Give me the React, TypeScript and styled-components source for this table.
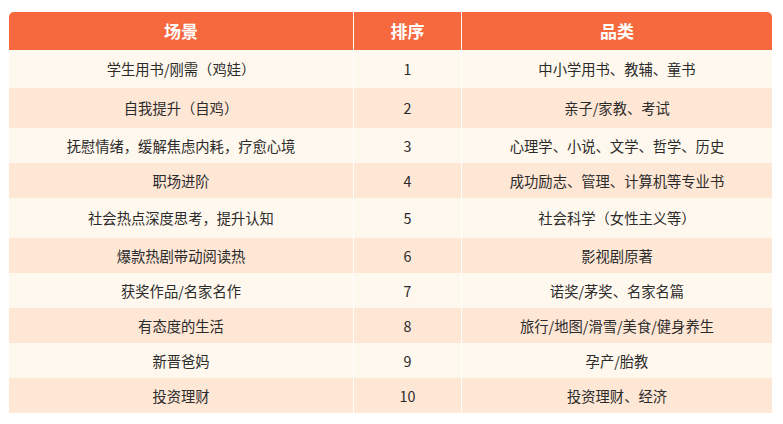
import React from "react";
import styled, { createGlobalStyle } from "styled-components";

const Global = createGlobalStyle`
  html, body { margin: 0; padding: 0; background: #ffffff; }
  body { font-family: "Noto Sans CJK SC", "Noto Sans", sans-serif; }
`;

const Page = styled.div`
  padding: 12px 13px 0 9px;
  width: 783px;
  box-sizing: border-box;
`;

const Table = styled.table`
  width: 761px;
  border-collapse: separate;
  border-spacing: 0;
  table-layout: fixed;
`;

const HeadCell = styled.th<{ $w: number }>`
  width: ${(p) => p.$w}px;
  height: 38px;
  padding: 0;
  background: #f6693e;
  color: #ffffff;
  font-size: 17px;
  font-weight: 700;
  text-align: center;
  vertical-align: middle;
  border-right: 1px solid #ffffff;
  line-height: 20px;
  &:first-child { border-top-left-radius: 5px; }
  &:last-child { border-top-right-radius: 5px; border-right: none; }
`;

const Row = styled.tr<{ $alt: boolean; $h: number }>`
  height: ${(p) => p.$h}px;
  background: ${(p) => (p.$alt ? "#ffe7d6" : "#fff8ee")};
`;

const Cell = styled.td`
  padding: 0;
  text-align: center;
  vertical-align: middle;
  font-size: 14.3px;
  line-height: 18px;
  color: #2b2b2b;
  border-right: 1px solid #ffffff;
  &:last-child { border-right: none; }
`;

const rows: [string, string, string, number][] = [
  ["学生用书/刚需（鸡娃）", "1", "中小学用书、教辅、童书", 38],
  ["自我提升（自鸡）", "2", "亲子/家教、考试", 40],
  ["抚慰情绪，缓解焦虑内耗，疗愈心境", "3", "心理学、小说、文学、哲学、历史", 35],
  ["职场进阶", "4", "成功励志、管理、计算机等专业书", 35],
  ["社会热点深度思考，提升认知", "5", "社会科学（女性主义等）", 40],
  ["爆款热剧带动阅读热", "6", "影视剧原著", 35],
  ["获奖作品/名家名作", "7", "诺奖/茅奖、名家名篇", 35],
  ["有态度的生活", "8", "旅行/地图/滑雪/美食/健身养生", 35],
  ["新晋爸妈", "9", "孕产/胎教", 35],
  ["投资理财", "10", "投资理财、经济", 35],
];

export default function App() {
  return (
    <Page>
      <Global />
      <Table>
        <thead>
          <tr>
            <HeadCell $w={344}>场景</HeadCell>
            <HeadCell $w={107}>排序</HeadCell>
            <HeadCell $w={310}>品类</HeadCell>
          </tr>
        </thead>
        <tbody>
          {rows.map(([a, b, c, h], i) => (
            <Row key={b} $alt={i % 2 === 1} $h={h}>
              <Cell>{a}</Cell>
              <Cell>{b}</Cell>
              <Cell>{c}</Cell>
            </Row>
          ))}
        </tbody>
      </Table>
    </Page>
  );
}
